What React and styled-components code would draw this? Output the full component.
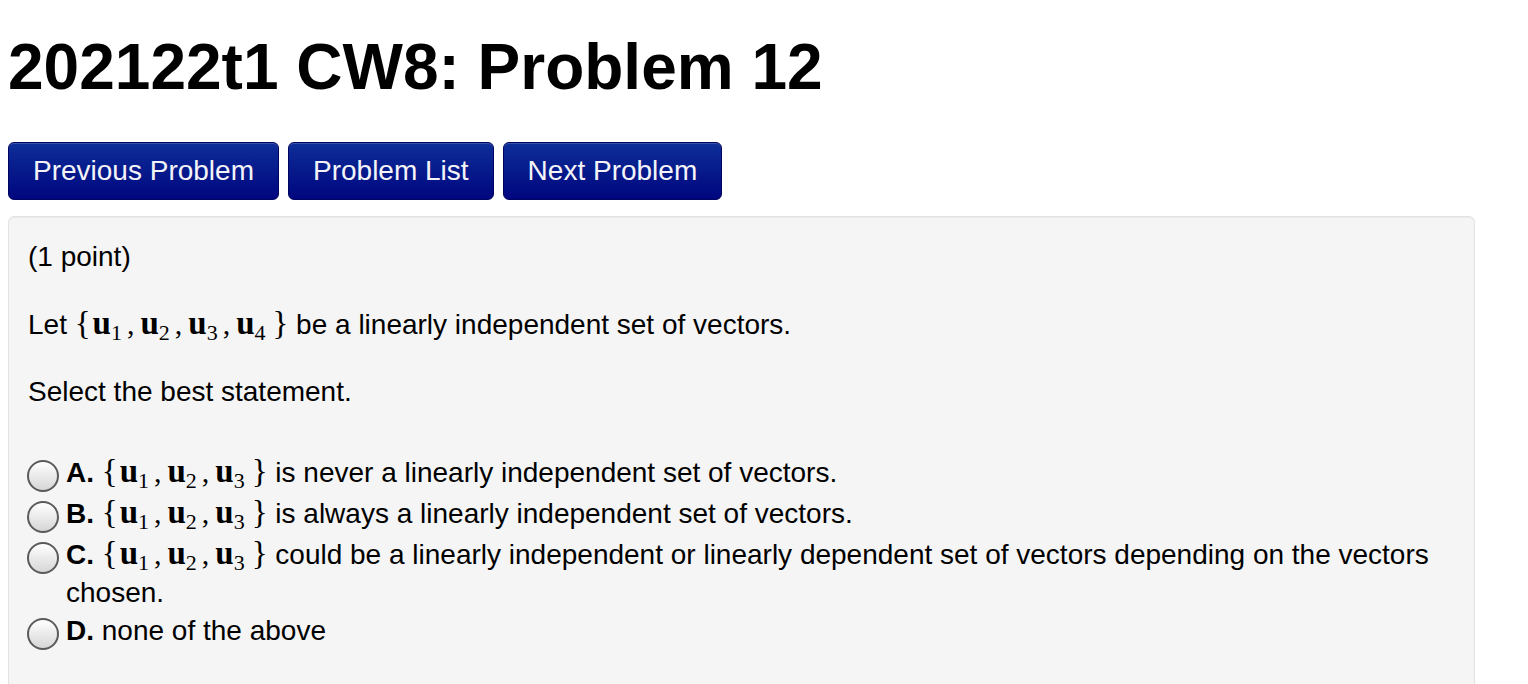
import styled, { createGlobalStyle } from "styled-components";

const GlobalStyle = createGlobalStyle`
    body {
        margin: 0;
        background: #fff;
        color: #000;
        font-family: "Liberation Sans", Arial, Helvetica, sans-serif;
    }
`;

const MathSet = ({ count }) => {
    const items = Array.from({ length: count }, (_, i) => i + 1);
    return (
        <SetWrap>
            <Brace>{"{"}</Brace>
            {items.map((n, i) => (
                <span key={n}>
                    <Vec>u</Vec>
                    <Sub>{n}</Sub>
                    {i < items.length - 1 && <Sep>,</Sep>}
                </span>
            ))}
            <Brace $close>{"}"}</Brace>
        </SetWrap>
    );
};

const options = [
    { letter: "A.", math: true, text: "is never a linearly independent set of vectors." },
    { letter: "B.", math: true, text: "is always a linearly independent set of vectors." },
    {
        letter: "C.",
        math: true,
        text: "could be a linearly independent or linearly dependent set of vectors depending on the vectors chosen.",
    },
    { letter: "D.", math: false, text: "none of the above" },
];

const App = () => {
    return (
        <Page>
            <GlobalStyle />
            <Title>202122t1 CW8: Problem 12</Title>
            <NavBar>
                <NavButton>Previous Problem</NavButton>
                <NavButton>Problem List</NavButton>
                <NavButton>Next Problem</NavButton>
            </NavBar>
            <ProblemPanel>
                <Para>(1 point)</Para>
                <Para>
                    Let <MathSet count={4} /> be a linearly independent set of vectors.
                </Para>
                <Para>Select the best statement.</Para>
                <OptionList>
                    {options.map((o) => (
                        <OptionRow key={o.letter} $math={o.math}>
                            <Radio type="radio" name="answer" />
                            <OptionText>
                                <b>{o.letter}</b>{" "}
                                {o.math && (
                                    <>
                                        <MathSet count={3} />{" "}
                                    </>
                                )}
                                {o.text}
                            </OptionText>
                        </OptionRow>
                    ))}
                </OptionList>
            </ProblemPanel>
        </Page>
    );
};

const Page = styled.div`
    padding: 0 53px 0 8px;
`;

const Title = styled.h1`
    margin: 32px 0 40px;
    font-size: 64px;
    line-height: 70px;
    font-weight: bold;
`;

const NavBar = styled.div`
    display: flex;
    gap: 9px;
`;

const NavButton = styled.button`
    margin: 0;
    padding: 13px 24px;
    font-family: "Liberation Sans", Arial, sans-serif;
    font-size: 28px;
    line-height: 30px;
    color: #f4f4f8;
    background: linear-gradient(to bottom, #0d2e98, #00067f);
    border: 1px solid #00045e;
    border-radius: 6px;
    box-shadow: inset 0 1px 0 rgba(255, 255, 255, 0.18);
    cursor: pointer;
`;

const ProblemPanel = styled.div`
    margin-top: 16px;
    padding: 20px 19px 40px;
    background: #f5f5f5;
    border: 1px solid #e3e3e3;
    border-radius: 6px;
    box-shadow: inset 0 1px 1px rgba(0, 0, 0, 0.05);
    font-size: 28px;
    line-height: 40px;
`;

const Para = styled.p`
    margin: 0 0 28px;
    &:nth-of-type(2) {
        margin-bottom: 27px;
    }
`;

const OptionList = styled.div`
    margin-top: 40px;
`;

const OptionRow = styled.label`
    display: flex;
    align-items: flex-start;
    padding: ${(p) => (p.$math ? "2px 0 1px" : "0")};
    line-height: 37.5px;
`;

const Radio = styled.input`
    appearance: none;
    flex: none;
    width: 32px;
    height: 32px;
    margin: 6px 7px 0 -1px;
    border: 2px solid #5a5a5a;
    border-radius: 50%;
    background: linear-gradient(to bottom, #ffffff, #d6d6d6);
    box-sizing: border-box;
`;

const OptionText = styled.div`
    flex: 1;
`;

const SetWrap = styled.span`
    font-family: "Liberation Serif", "Times New Roman", serif;
    line-height: 0;
    white-space: nowrap;
`;

const Brace = styled.span`
    font-size: 33px;
    margin: ${(p) => (p.$close ? "0 0 0 7px" : "0 2px 0 0")};
`;

const Vec = styled.span`
    font-size: 33px;
    font-weight: bold;
`;

const Sub = styled.span`
    font-size: 22px;
    vertical-align: -6px;
`;

const Sep = styled.span`
    font-size: 30px;
    margin: 0 6px 0 5px;
`;

export default App;
